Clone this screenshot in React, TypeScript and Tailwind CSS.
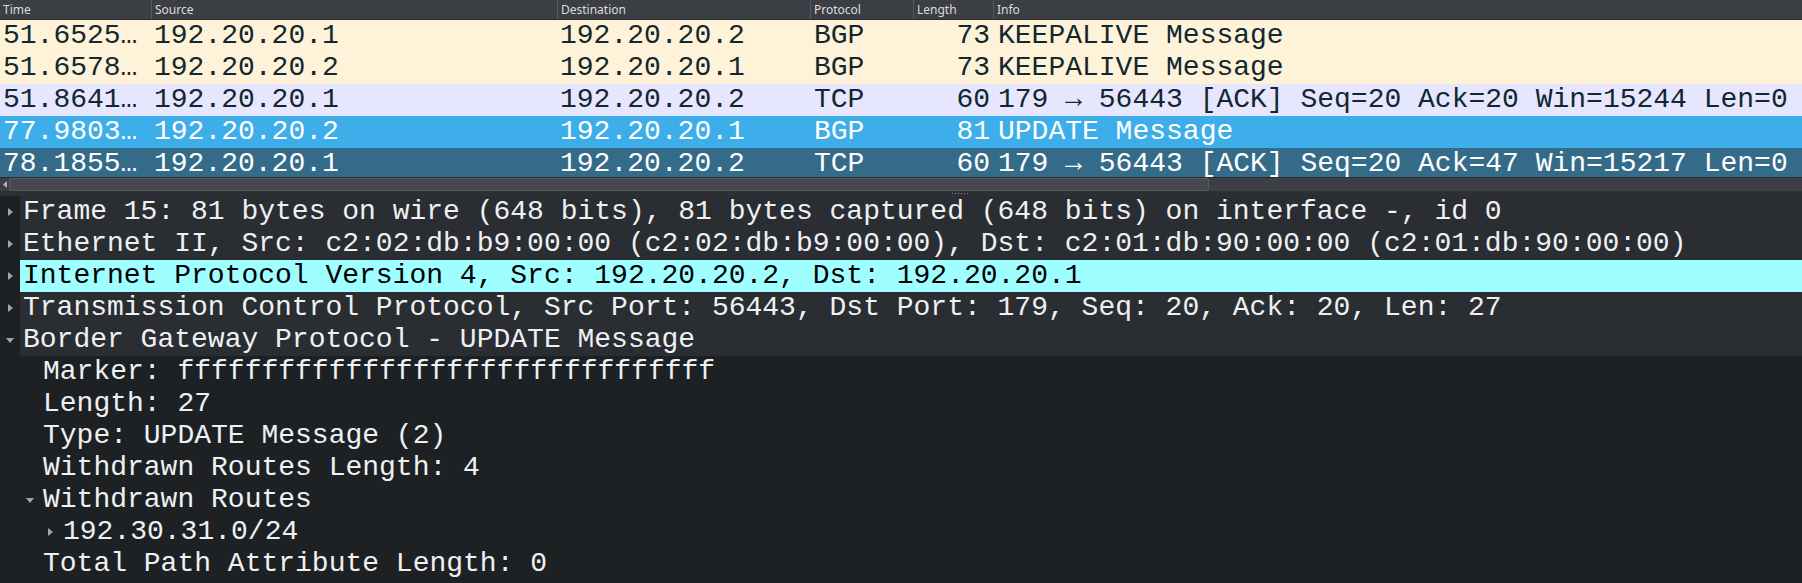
import React from 'react'

type Packet = {
  time: string
  src: string
  dst: string
  proto: string
  len: string
  info: string
  tone: 'routing' | 'tcp' | 'selected' | 'related'
}

const packets: Packet[] = [
  { time: '51.6525…', src: '192.20.20.1', dst: '192.20.20.2', proto: 'BGP', len: '73', info: 'KEEPALIVE Message', tone: 'routing' },
  { time: '51.6578…', src: '192.20.20.2', dst: '192.20.20.1', proto: 'BGP', len: '73', info: 'KEEPALIVE Message', tone: 'routing' },
  { time: '51.8641…', src: '192.20.20.1', dst: '192.20.20.2', proto: 'TCP', len: '60', info: '179 → 56443 [ACK] Seq=20 Ack=20 Win=15244 Len=0', tone: 'tcp' },
  { time: '77.9803…', src: '192.20.20.2', dst: '192.20.20.1', proto: 'BGP', len: '81', info: 'UPDATE Message', tone: 'selected' },
  { time: '78.1855…', src: '192.20.20.1', dst: '192.20.20.2', proto: 'TCP', len: '60', info: '179 → 56443 [ACK] Seq=20 Ack=47 Win=15217 Len=0', tone: 'related' },
]

const toneClass = {
  routing: 'bg-[#fef3d8] text-[#12272e]',
  tcp: 'bg-[#e7e6ff] text-[#12272e]',
  selected: 'bg-[#3daee9] text-white',
  related: 'bg-[#346b89] text-white',
}

type Node = {
  label: string
  level: number
  arrow?: 'right' | 'down'
  active?: boolean
}

const nodes: Node[] = [
  { label: 'Frame 15: 81 bytes on wire (648 bits), 81 bytes captured (648 bits) on interface -, id 0', level: 0, arrow: 'right' },
  { label: 'Ethernet II, Src: c2:02:db:b9:00:00 (c2:02:db:b9:00:00), Dst: c2:01:db:90:00:00 (c2:01:db:90:00:00)', level: 0, arrow: 'right' },
  { label: 'Internet Protocol Version 4, Src: 192.20.20.2, Dst: 192.20.20.1', level: 0, arrow: 'right', active: true },
  { label: 'Transmission Control Protocol, Src Port: 56443, Dst Port: 179, Seq: 20, Ack: 20, Len: 27', level: 0, arrow: 'right' },
  { label: 'Border Gateway Protocol - UPDATE Message', level: 0, arrow: 'down' },
  { label: 'Marker: ffffffffffffffffffffffffffffffff', level: 1 },
  { label: 'Length: 27', level: 1 },
  { label: 'Type: UPDATE Message (2)', level: 1 },
  { label: 'Withdrawn Routes Length: 4', level: 1 },
  { label: 'Withdrawn Routes', level: 1, arrow: 'down' },
  { label: '192.30.31.0/24', level: 2, arrow: 'right' },
  { label: 'Total Path Attribute Length: 0', level: 1 },
]

const indentClass = ['pl-0', 'pl-[20px]', 'pl-[40px]']

const Arrow = ({ dir }: { dir: 'right' | 'down' }) =>
  dir === 'right' ? (
    <svg width="5" height="8" viewBox="0 0 5 8" className="fill-[#a3a5a8]">
      <path d="M0 0 L5 4 L0 8 Z" />
    </svg>
  ) : (
    <svg width="8" height="5" viewBox="0 0 8 5" className="fill-[#a3a5a8]">
      <path d="M0 0 L8 0 L4 5 Z" />
    </svg>
  )

const columns = 'grid grid-cols-[151px_406px_253px_103px_80px_1fr]'

export default function App() {
  return (
    <div className="w-[1802px] h-[583px] overflow-hidden bg-[#1e2124] flex flex-col font-['Liberation_Mono',monospace]">
      {/* Packet list, last row is cut by the scrollbar as in the app */}
      <div className="h-[177px] shrink-0 overflow-hidden flex flex-col">
        <div className={`${columns} h-[20px] shrink-0 bg-[#3b3e43] border-b border-[#2a2c30] text-[12px] leading-[19px] text-[#dcdddf] font-['Noto_Sans',sans-serif]`}>
          <div className="pl-[3px]">Time</div>
          <div className="pl-[3px] border-l border-[#55585d]">Source</div>
          <div className="pl-[3px] border-l border-[#55585d]">Destination</div>
          <div className="pl-[3px] border-l border-[#55585d]">Protocol</div>
          <div className="pl-[3px] border-l border-[#55585d]">Length</div>
          <div className="pl-[3px] border-l border-[#55585d]">Info</div>
        </div>
        {packets.map((p, i) => (
          <div key={i} className={`${columns} h-[32px] shrink-0 text-[28px] leading-[32px] whitespace-nowrap ${toneClass[p.tone]}`}>
            <div className="pl-[3px] overflow-hidden">{p.time}</div>
            <div className="pl-[3px] overflow-hidden">{p.src}</div>
            <div className="pl-[3px] overflow-hidden">{p.dst}</div>
            <div className="pl-[4px] overflow-hidden">{p.proto}</div>
            <div className="pr-[3px] text-right overflow-hidden">{p.len}</div>
            <div className="pl-[5px] overflow-hidden">{p.info}</div>
          </div>
        ))}
      </div>

      {/* Horizontal scrollbar */}
      <div className="h-[14px] shrink-0 flex items-stretch bg-[#3c3f44] border-t border-[#2b2e32]">
        <div className="w-[9px] flex items-center justify-center">
          <svg width="4" height="7" viewBox="0 0 4 7" className="fill-[#b0b2b5]">
            <path d="M4 0 L0 3.5 L4 7 Z" />
          </svg>
        </div>
        <div className="w-[1200px] bg-[#45484d] border border-[#55585d] rounded-[2px]" />
      </div>

      {/* Splitter */}
      <div className="h-[5px] shrink-0 bg-[#2c2f33] flex justify-center items-center">
        <div className="flex gap-[2px] ml-[118px]">
          {[0, 1, 2, 3, 4, 5].map(d => (
            <span key={d} className="w-[1px] h-[1px] bg-[#8a8c8f]" />
          ))}
        </div>
      </div>

      {/* Packet details tree */}
      <div className="flex-1 flex flex-col text-[28px] leading-[32px] whitespace-nowrap">
        {nodes.map((n, i) => (
          <div key={i} className={`flex h-[32px] shrink-0 ${indentClass[n.level]}`}>
            <div className="w-[20px] shrink-0 flex items-center justify-center">
              {n.arrow && <Arrow dir={n.arrow} />}
            </div>
            <div
              className={`flex-1 pl-[3px] ${
                n.level === 0
                  ? n.active
                    ? 'bg-[#9ffeff] text-black'
                    : 'bg-[#2a2d32] text-[#eff0f1]'
                  : 'text-[#eff0f1]'
              }`}
            >
              {n.label}
            </div>
          </div>
        ))}
      </div>
    </div>
  )
}
